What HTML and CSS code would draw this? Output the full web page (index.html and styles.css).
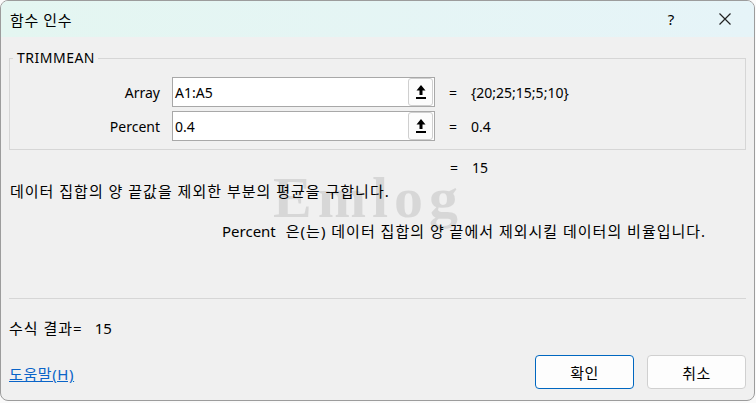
FILE: index.html
```html
<!DOCTYPE html>
<html>
    <head>
        <title>함수 인수</title>
        <meta charset="UTF-8">
        <meta name="viewport" content="width=device-width, initial-scale=1.0">
        <link rel="stylesheet" href="styles.css">
    </head>
    <body>
        <div class="dialog">
            <div class="titlebar">
                <span class="title">함수 인수</span>
                <span class="tb-help">?</span>
                <span class="tb-close">
                    <svg width="14" height="14" viewBox="0 0 14 14"><path d="M1.5 1.5 L12.5 12.5 M12.5 1.5 L1.5 12.5" stroke="#222" stroke-width="1.2" fill="none"/></svg>
                </span>
            </div>
            <div class="content">
                <fieldset class="args">
                    <legend>TRIMMEAN</legend>
                    <div class="arg-row">
                        <span class="arg-label">Array</span>
                        <div class="ref-input">
                            <span class="ref-value">A1:A5</span>
                            <span class="ref-btn">
                                <svg width="12" height="16" viewBox="0 0 12 16"><path d="M6 1 L10.5 6.5 L7.5 6.5 L7.5 11 L4.5 11 L4.5 6.5 L1.5 6.5 Z" fill="#000"/><rect x="1" y="13" width="10" height="2" fill="#000"/></svg>
                            </span>
                        </div>
                        <span class="eq">=</span>
                        <span class="res">{20;25;15;5;10}</span>
                    </div>
                    <div class="arg-row">
                        <span class="arg-label">Percent</span>
                        <div class="ref-input">
                            <span class="ref-value">0.4</span>
                            <span class="ref-btn">
                                <svg width="12" height="16" viewBox="0 0 12 16"><path d="M6 1 L10.5 6.5 L7.5 6.5 L7.5 11 L4.5 11 L4.5 6.5 L1.5 6.5 Z" fill="#000"/><rect x="1" y="13" width="10" height="2" fill="#000"/></svg>
                            </span>
                        </div>
                        <span class="eq">=</span>
                        <span class="res">0.4</span>
                    </div>
                </fieldset>
                <div class="total">
                    <span class="eq">=</span>
                    <span class="res">15</span>
                </div>
                <p class="desc">데이터 집합의 양 끝값을 제외한 부분의 평균을 구합니다.</p>
                <p class="arg-desc"><span class="arg-name">Percent</span><span class="hangul">은(는) 데이터 집합의 양 끝에서 제외시킬 데이터의 비율입니다.</span></p>
                <div class="separator"></div>
                <div class="formula"><span class="hangul">수식 결과=</span><span class="formula-val">15</span></div>
                <div class="footer">
                    <a class="help-link" href="#">도움말(H)</a>
                    <div class="buttons">
                        <button class="btn primary">확인</button>
                        <button class="btn">취소</button>
                    </div>
                </div>
            </div>
            <div class="watermark">Emlog</div>
        </div>
    </body>
</html>
```

FILE: styles.css
```css
body{
    margin: 0px;
    background-color: #fafafa;
    font-family: "Noto Sans", "Noto Sans CJK KR", sans-serif;
    font-size: 14px;
    color: #000;
}
.dialog{
    position: relative;
    box-sizing: border-box;
    width: 755px;
    height: 401px;
    border: 1px solid #9c9c9c;
    border-radius: 8px;
    background-color: #f0f0f0;
    overflow: hidden;
}
.titlebar{
    height: 36px;
    display: flex;
    align-items: center;
    background: linear-gradient(to right, #e4f6f1, #e6f4f8);
}
.title{
    margin-left: 9px;
    font-size: 15px;
    letter-spacing: 0.6px;
    flex: 1;
}
.tb-help{
    width: 20px;
    text-align: center;
    font-size: 15px;
    margin-right: 37px;
}
.tb-close{
    display: flex;
    width: 14px;
    margin-right: 22px;
}
.content{
    padding: 0px 8px;
}
.args{
    margin: 11px 0px 0px 0px;
    padding: 9px 0px 8px 0px;
    border: 1px solid #d6d6d6;
}
.args legend{
    margin-left: 3px;
    padding: 0px 3px 0px 4px;
    line-height: 20px;
    letter-spacing: 0.5px;
}
.arg-row{
    display: flex;
    align-items: center;
    height: 30px;
    margin-bottom: 4px;
}
.arg-row:last-child{
    margin-bottom: 0px;
}
.arg-label{
    width: 150px;
    text-align: right;
    margin-right: 12px;
}
.ref-input{
    box-sizing: border-box;
    width: 263px;
    height: 30px;
    display: flex;
    align-items: center;
    background-color: #fff;
    border: 1px solid #a8a8a8;
}
.ref-value{
    flex: 1;
    padding-left: 2px;
}
.ref-btn{
    box-sizing: border-box;
    width: 25px;
    height: 28px;
    margin-right: 1px;
    display: flex;
    align-items: center;
    justify-content: center;
    border: 1px solid #cfcfcf;
    border-radius: 3px;
    background-color: #fcfcfc;
}
.eq{
    width: 36px;
    text-align: center;
}
.total{
    display: flex;
    height: 20px;
    align-items: center;
    margin-top: 7px;
    padding-left: 427px;
}
.desc{
    margin: 4px 0px 0px 1px;
    line-height: 20px;
    font-size: 15px;
    letter-spacing: 1px;
}
.arg-desc{
    margin: 20px 0px 0px 213px;
    line-height: 20px;
    font-size: 15px;
}
.arg-name{
    margin-right: 10px;
}
.hangul{
    letter-spacing: 1px;
}
.separator{
    margin-top: 57px;
    border-top: 1px solid #d6d6d6;
}
.formula{
    margin-top: 19px;
    line-height: 20px;
    font-size: 15px;
}
.formula-val{
    margin-left: 12px;
}
.footer{
    margin-top: 17px;
    display: flex;
    align-items: center;
    justify-content: space-between;
}
.help-link{
    color: #0a64c8;
    font-size: 15px;
    letter-spacing: 0.6px;
    margin-top: 3px;
}
.buttons{
    display: flex;
    gap: 13px;
}
.btn{
    box-sizing: border-box;
    width: 99px;
    height: 34px;
    font-family: "Noto Sans", "Noto Sans CJK KR", sans-serif;
    font-size: 15px;
    letter-spacing: 0.5px;
    background-color: #fdfdfd;
    border: 1px solid #d0d0d0;
    border-radius: 4px;
    color: #000;
}
.btn.primary{
    border-color: #0067c0;
}
.watermark{
    position: absolute;
    left: 272px;
    top: 163px;
    font-family: "Liberation Serif", serif;
    font-weight: bold;
    font-size: 58px;
    letter-spacing: 6px;
    color: rgba(0, 0, 0, 0.1);
    pointer-events: none;
}
```
